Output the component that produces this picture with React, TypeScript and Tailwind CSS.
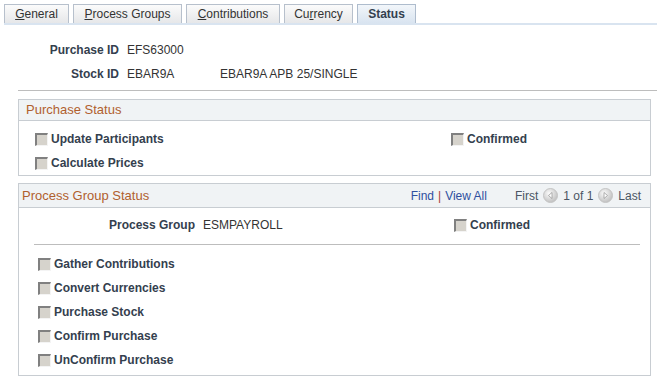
import React from 'react';

const tabs = [
  { label: 'General', key: 'G', w: 'w-[65px]' },
  { label: 'Process Groups', key: 'P', w: 'w-[109px]' },
  { label: 'Contributions', key: 'C', w: 'w-[94px]' },
  { label: 'Currency', key: 'r', w: 'w-[69px]' },
];

function AccessLabel({ text, k }: { text: string; k: string }) {
  const i = text.indexOf(k);
  return (
    <>
      {text.slice(0, i)}
      <span className="underline">{text[i]}</span>
      {text.slice(i + 1)}
    </>
  );
}

// disabled, unchecked PeopleSoft checkbox
function Check() {
  return (
    <span className="inline-block w-[13px] h-[13px] shrink-0 bg-[#d6d3cc] border-t-2 border-l-2 border-t-[#808080] border-l-[#808080] border-b border-r border-b-[#f4f4f4] border-r-[#f4f4f4]" />
  );
}

function CheckRow({ label }: { label: string }) {
  return (
    <div className="h-[24px] flex items-center gap-[3px]">
      <Check />
      <span className="font-bold text-[#34404e]">{label}</span>
    </div>
  );
}

function NavArrow({ dir }: { dir: 'left' | 'right' }) {
  return (
    <svg width="15" height="15" viewBox="0 0 15 15" className="shrink-0">
      <defs>
        <radialGradient id={`g-${dir}`} cx="40%" cy="35%" r="70%">
          <stop offset="0%" stopColor="#fbfbfb" />
          <stop offset="100%" stopColor="#bcbcbc" />
        </radialGradient>
      </defs>
      <circle cx="7.5" cy="7.5" r="7" fill={`url(#g-${dir})`} stroke="#c4c4c4" />
      {dir === 'left' ? (
        <path d="M9 4.5 L5.5 7.5 L9 10.5 Z" fill="#ffffff" stroke="#9a9a9a" strokeWidth="0.8" />
      ) : (
        <path d="M6 4.5 L9.5 7.5 L6 10.5 Z" fill="#ffffff" stroke="#9a9a9a" strokeWidth="0.8" />
      )}
    </svg>
  );
}

export default function App() {
  return (
    <div className="w-[657px] h-[389px] bg-white overflow-hidden font-['Liberation_Sans',Arial,sans-serif] text-[12px] text-[#333]">
      {/* Tabs */}
      <div className="pt-[4px] pl-[4px]">
        <div className="flex gap-[4px] h-[19px]">
          {tabs.map((t) => (
            <div
              key={t.label}
              className={`${t.w} h-[19px] flex items-center justify-center border border-b-0 border-[#b7c0cc] bg-gradient-to-b from-[#fbfbfb] to-[#e6e7e9] text-[#333]`}
            >
              <AccessLabel text={t.label} k={t.key} />
            </div>
          ))}
          <div className="w-[59px] h-[19px] flex items-center justify-center border border-b-0 border-[#aebccd] bg-gradient-to-b from-[#f2f6fa] to-[#d9e4f0] font-bold text-[#333f4f]">
            Status
          </div>
        </div>
        <div className="h-[2px] bg-[#d9e4f0]" />
      </div>

      {/* Header fields */}
      <div className="mt-[13px]">
        <div className="h-[24px] flex items-center">
          <span className="w-[119px] text-right font-bold text-[#34404e]">Purchase ID</span>
          <span className="ml-[8px]">EFS63000</span>
        </div>
        <div className="h-[24px] flex items-center">
          <span className="w-[119px] text-right font-bold text-[#34404e]">Stock ID</span>
          <span className="ml-[8px] w-[93px]">EBAR9A</span>
          <span>EBAR9A APB 25/SINGLE</span>
        </div>
      </div>
      <div className="mt-[4px] ml-[18px] h-px bg-[#bdbdbd]" />

      {/* Purchase Status */}
      <div className="mt-[8px] ml-[18px] w-[633px] border border-[#c8cdd2]">
        <div className="h-[21px] flex items-center pl-[7px] bg-[#f0f3f5] border-b border-[#c8cdd2] text-[13px] text-[#b0602e]">
          Purchase Status
        </div>
        <div className="pt-[6px] pl-[16px] flex">
          <div className="w-[416px]">
            <CheckRow label="Update Participants" />
            <CheckRow label="Calculate Prices" />
          </div>
          <div>
            <CheckRow label="Confirmed" />
          </div>
        </div>
      </div>

      {/* Process Group Status */}
      <div className="mt-[7px] ml-[18px] w-[633px] border border-[#c8cdd2]">
        <div className="h-[24px] flex items-center justify-between pl-[3px] pr-[9px] bg-[#f0f3f5] border-b border-[#c8cdd2]">
          <span className="text-[13px] text-[#b0602e]">Process Group Status</span>
          <div className="flex items-center">
            <span className="text-[#2f4f9f]">Find</span>
            <span className="text-[#a83a3a] mx-[4px]">|</span>
            <span className="text-[#2f4f9f]">View All</span>
            <span className="ml-[28px] text-[#4b5563]">First</span>
            <span className="mx-[5px]"><NavArrow dir="left" /></span>
            <span className="text-[#4b5563]">1 of 1</span>
            <span className="mx-[5px]"><NavArrow dir="right" /></span>
            <span className="text-[#4b5563]">Last</span>
          </div>
        </div>
        <div className="pt-[5px]">
          <div className="h-[24px] flex items-center">
            <span className="w-[176px] text-right font-bold text-[#34404e]">Process Group</span>
            <span className="ml-[8px] w-[251px]">ESMPAYROLL</span>
            <CheckRow label="Confirmed" />
          </div>
          <div className="mt-[7px] ml-[15px] w-[606px] h-px bg-[#bdbdbd]" />
          <div className="mt-[7px] pl-[19px] pb-[3px]">
            <CheckRow label="Gather Contributions" />
            <CheckRow label="Convert Currencies" />
            <CheckRow label="Purchase Stock" />
            <CheckRow label="Confirm Purchase" />
            <CheckRow label="UnConfirm Purchase" />
          </div>
        </div>
      </div>
    </div>
  );
}
